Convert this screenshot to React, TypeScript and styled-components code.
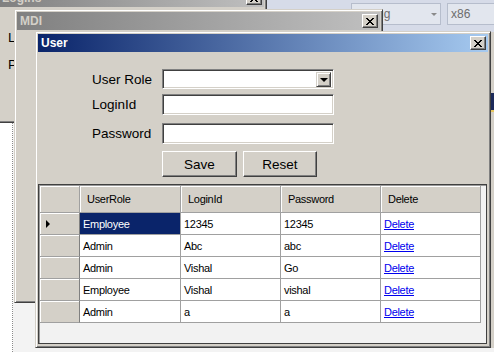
import React from 'react';
import styled, { createGlobalStyle } from 'styled-components';

const GlobalStyle = createGlobalStyle`
  html, body {
    margin: 0;
    padding: 0;
  }
  body {
    width: 494px;
    height: 352px;
    overflow: hidden;
    background: #f3f3f3;
    font-family: "Liberation Sans", Arial, sans-serif;
  }
`;

interface UserRow {
  role: string;
  loginId: string;
  password: string;
}

const users: Array<UserRow> = [
  { role: 'Employee', loginId: '12345', password: '12345' },
  { role: 'Admin', loginId: 'Abc', password: 'abc' },
  { role: 'Admin', loginId: 'Vishal', password: 'Go' },
  { role: 'Employee', loginId: 'Vishal', password: 'vishal' },
  { role: 'Admin', loginId: 'a', password: 'a' },
];

interface WindowProps {
  x: number;
  y: number;
  w: number;
  h: number;
  title: string;
  active?: boolean;
  children?: React.ReactNode;
}

const CloseGlyph = () => (
  <svg width="8" height="7" viewBox="0 0 8 7" shapeRendering="crispEdges">
    <path
      fill="#000"
      d="M0 0h2v1H0zM6 0h2v1H6zM1 1h2v1H1zM5 1h2v1H5zM2 2h4v1H2zM3 3h2v1H3zM2 4h4v1H2zM1 5h2v1H1zM5 5h2v1H5zM0 6h2v1H0zM6 6h2v1H6z"
    />
  </svg>
);

const Window: React.FC<WindowProps> = ({ x, y, w, h, title, active, children }) => (
  <Frame $x={x} $y={y} $w={w} $h={h}>
    <TitleBar $active={active}>
      <span>{title}</span>
      <CloseButton>
        <CloseGlyph />
      </CloseButton>
    </TitleBar>
    {children}
  </Frame>
);

export default function App() {
  return (
    <>
      <GlobalStyle />
      <Desktop>
        <Toolbar>
          <ToolCombo $w={90}>
            Debug
            <ToolArrow />
          </ToolCombo>
          <ToolCombo $w={60}>x86</ToolCombo>
        </Toolbar>
        <SidePanel>
          <SideBlock />
        </SidePanel>
        <EditorPane />

        <Window x={-4} y={-14} w={271} h={137} title="Logins">
          <BackBody $top={23} $gap={11}>
            <BackText>LoginId</BackText>
            <BackText>Password</BackText>
          </BackBody>
        </Window>

        <Window x={14} y={9} w={369} h={294} title="MDI">
          <BackBody $top={7} $gap={0}>
            <BackText style={{ marginLeft: 15 }}>Create User</BackText>
          </BackBody>
        </Window>

        <Window x={35} y={31} w={456} h={317} title="User" active>
          <Body>
            <Form>
              <FieldRow $top={0} $h={20}>
                <Label>User Role</Label>
                <Combo>
                  <DropButton>
                    <DropArrow />
                  </DropButton>
                </Combo>
              </FieldRow>
              <FieldRow $top={5} $h={21}>
                <Label>LoginId</Label>
                <TextBox />
              </FieldRow>
              <FieldRow $top={8} $h={21}>
                <Label>Password</Label>
                <TextBox />
              </FieldRow>
              <FieldRow $top={7} $h={26}>
                <Label />
                <Button $w={75}>Save</Button>
                <Button $w={74}>Reset</Button>
              </FieldRow>
            </Form>

            <Grid>
              <GridRow $h={27}>
                <HeaderCell />
                <HeaderCell>UserRole</HeaderCell>
                <HeaderCell>LoginId</HeaderCell>
                <HeaderCell>Password</HeaderCell>
                <HeaderCell>Delete</HeaderCell>
              </GridRow>
              {users.map((user, i) => (
                <GridRow $h={22} key={`row-${i}`}>
                  <RowHeader>{i === 0 && <RowPointer />}</RowHeader>
                  <Cell $selected={i === 0}>{user.role}</Cell>
                  <Cell>{user.loginId}</Cell>
                  <Cell>{user.password}</Cell>
                  <Cell>
                    <DeleteLink href="#">Delete</DeleteLink>
                  </Cell>
                </GridRow>
              ))}
            </Grid>
          </Body>
        </Window>
      </Desktop>
    </>
  );
}

const Desktop = styled.div`
  position: relative;
  width: 494px;
  height: 352px;
  overflow: hidden;
  background: #f3f3f3;
`;

const Toolbar = styled.div`
  position: absolute;
  left: 266px;
  top: 0;
  width: 228px;
  height: 32px;
  box-sizing: border-box;
  padding: 3px 0 0 85px;
  display: flex;
  gap: 6px;
  background: #d6dbe8;
`;

const ToolCombo = styled.div<{ $w: number }>`
  position: relative;
  flex: none;
  width: ${(p) => p.$w}px;
  height: 22px;
  box-sizing: border-box;
  padding-left: 3px;
  display: flex;
  align-items: center;
  border: 1px solid #b6bdcc;
  background: #e2e6ee;
  color: #6d6d6d;
  font-size: 12px;
`;

const ToolArrow = styled.span`
  position: absolute;
  right: 3px;
  top: 9px;
  border-top: 3px solid #8a8a8a;
  border-left: 3px solid transparent;
  border-right: 3px solid transparent;
`;

const SidePanel = styled.div`
  position: absolute;
  left: 491px;
  top: 32px;
  width: 3px;
  height: 316px;
  background: #d4d0c8;
`;

const SideBlock = styled.div`
  margin-top: 61px;
  height: 17px;
  background: #1c2a5a;
  border-bottom: 2px solid #e8c860;
`;

const EditorPane = styled.div`
  position: absolute;
  left: 0;
  top: 123px;
  width: 13px;
  height: 229px;
  box-sizing: border-box;
  background: #fff;
  border-right: 1px dotted #8a8a8a;
`;

const Frame = styled.div<{ $x: number; $y: number; $w: number; $h: number }>`
  position: absolute;
  left: ${(p) => p.$x}px;
  top: ${(p) => p.$y}px;
  width: ${(p) => p.$w}px;
  height: ${(p) => p.$h}px;
  box-sizing: border-box;
  padding: 2px;
  display: flex;
  flex-direction: column;
  background: #d4d0c8;
  border: 1px solid;
  border-color: #d4d0c8 #404040 #404040 #d4d0c8;
  box-shadow: inset 1px 1px #fff, inset -1px -1px #808080;
  overflow: hidden;
`;

const TitleBar = styled.div<{ $active?: boolean }>`
  flex: none;
  height: 18px;
  padding: 0 2px 0 3px;
  display: flex;
  align-items: center;
  justify-content: space-between;
  background: ${(p) =>
    p.$active
      ? 'linear-gradient(to right, #0a246a, #a6caf0)'
      : 'linear-gradient(to right, #808080, #c0c0c0)'};
  color: ${(p) => (p.$active ? '#fff' : '#d4d0c8')};
  font-size: 12px;
  font-weight: bold;
`;

const CloseButton = styled.div`
  width: 16px;
  height: 14px;
  box-sizing: border-box;
  display: flex;
  align-items: center;
  justify-content: center;
  background: #d4d0c8;
  border: 1px solid;
  border-color: #fff #404040 #404040 #fff;
  box-shadow: inset -1px -1px #808080;
`;

const BackBody = styled.div<{ $top: number; $gap: number }>`
  display: flex;
  flex-direction: column;
  gap: ${(p) => p.$gap}px;
  padding: ${(p) => p.$top}px 0 0 9px;
`;

const BackText = styled.span`
  font-size: 13.5px;
  line-height: 16px;
  color: #000;
  white-space: nowrap;
`;

const Body = styled.div`
  flex: 1;
  display: flex;
  flex-direction: column;
`;

const Form = styled.div`
  display: flex;
  flex-direction: column;
  padding: 17px 0 0 54px;
`;

const FieldRow = styled.div<{ $top: number; $h: number }>`
  display: flex;
  align-items: center;
  gap: 0;
  height: ${(p) => p.$h}px;
  margin-top: ${(p) => p.$top}px;
`;

const Label = styled.label`
  flex: none;
  width: 70px;
  font-size: 13.5px;
  color: #000;
  white-space: nowrap;
`;

const TextBox = styled.div`
  width: 172px;
  height: 100%;
  box-sizing: border-box;
  background: #fff;
  border: 1px solid;
  border-color: #808080 #fff #fff #808080;
  box-shadow: inset 1px 1px #404040, inset -1px -1px #d4d0c8;
`;

const Combo = styled(TextBox)`
  display: flex;
  justify-content: flex-end;
  align-items: center;
  padding-right: 2px;
`;

const DropButton = styled.div`
  width: 15px;
  height: 15px;
  box-sizing: border-box;
  display: flex;
  align-items: center;
  justify-content: center;
  background: #d4d0c8;
  border: 1px solid;
  border-color: #d4d0c8 #404040 #404040 #d4d0c8;
  box-shadow: inset 1px 1px #fff, inset -1px -1px #808080;
`;

const DropArrow = styled.span`
  border-top: 4px solid #000;
  border-left: 4px solid transparent;
  border-right: 4px solid transparent;
  margin-top: 1px;
`;

const Button = styled.button<{ $w: number }>`
  width: ${(p) => p.$w}px;
  height: 100%;
  margin-right: 6px;
  padding: 0;
  box-sizing: border-box;
  background: #d4d0c8;
  border: 1px solid;
  border-color: #fff #404040 #404040 #fff;
  box-shadow: inset -1px -1px #808080;
  font-family: "Liberation Sans", Arial, sans-serif;
  font-size: 13.5px;
  color: #000;
`;

const Grid = styled.div`
  margin-top: 7px;
  width: 449px;
  height: 160px;
  box-sizing: border-box;
  padding: 1px 0 0 1px;
  background: #f2f2f2;
  border: 1px solid #404040;
  box-shadow: inset 1px 1px #9a9a9a;
  font-size: 11px;
  letter-spacing: -0.3px;
  overflow: hidden;
`;

const GridRow = styled.div<{ $h: number }>`
  display: grid;
  grid-template-columns: 40px 101px 100px 100px 100px;
  height: ${(p) => p.$h}px;
`;

const HeaderCell = styled.div`
  display: flex;
  align-items: center;
  padding-left: 7px;
  box-sizing: border-box;
  background: #d4d0c8;
  border-right: 1px solid #a0a0a0;
  border-bottom: 1px solid #a0a0a0;
  box-shadow: inset 1px 1px #fff;
  color: #000;
`;

const RowHeader = styled.div`
  display: flex;
  align-items: center;
  padding-left: 6px;
  box-sizing: border-box;
  background: #d4d0c8;
  border-right: 1px solid #808080;
  border-bottom: 1px solid #a0a0a0;
  box-shadow: inset 1px 1px #fff;
`;

const RowPointer = styled.span`
  border-left: 4px solid #000;
  border-top: 4px solid transparent;
  border-bottom: 4px solid transparent;
`;

const Cell = styled.div<{ $selected?: boolean }>`
  display: flex;
  align-items: center;
  padding-left: 3px;
  box-sizing: border-box;
  background: ${(p) => (p.$selected ? '#0a246a' : '#fff')};
  color: ${(p) => (p.$selected ? '#fff' : '#000')};
  border-right: 1px solid #a0a0a0;
  border-bottom: 1px solid #a0a0a0;
  white-space: nowrap;
`;

const DeleteLink = styled.a`
  color: #0000ee;
  text-decoration: underline;
`;
